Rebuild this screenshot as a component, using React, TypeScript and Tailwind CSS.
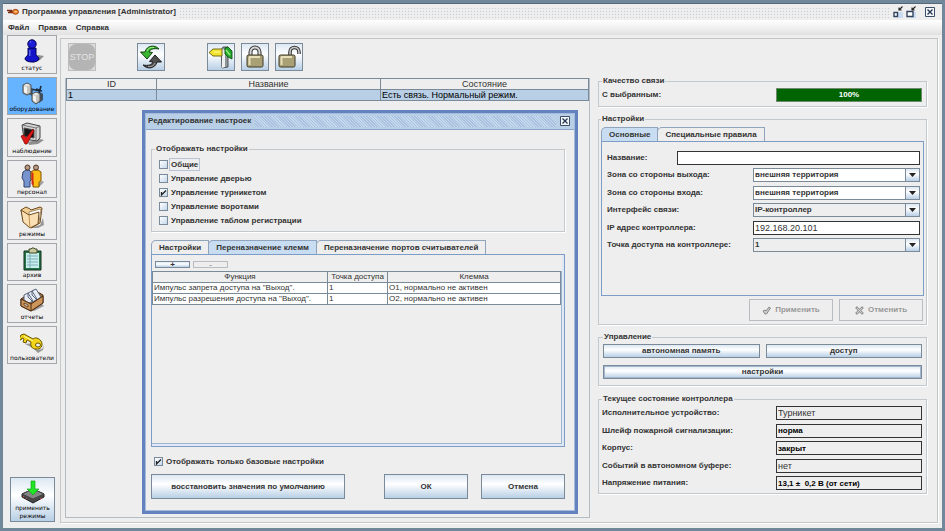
import { useState } from "react";
import type { ReactNode } from "react";
import clsx from "clsx";

const BUTTON_FACE =
  "border border-[#7a8a99] bg-linear-to-b from-[#dde8f3] via-white via-40% to-[#b8cfe5]";

/* ---------- icons ---------- */

function KeyMark() {
  return (
    <svg width="12" height="8" viewBox="0 0 12 8" aria-hidden>
      <path d="M0 2.5h5M1 4.5h5M6.5 3.5h-4" stroke="#7c2d12" strokeWidth="1.4" />
      <ellipse cx="8.5" cy="3.8" rx="3" ry="2.5" fill="#f08020" stroke="#8a3a10" strokeWidth=".8" />
      <path d="M7.5 3.8h2.6" stroke="#fff" strokeWidth=".8" />
    </svg>
  );
}

function CloseMark() {
  return (
    <svg width="10" height="10" viewBox="0 0 10 10" aria-hidden>
      <path d="M.5.5h9v9h-9z" fill="#f3f6fa" stroke="#3c4d66" />
      <path d="m2.5 2.5 5 5m0-5-5 5" stroke="#26364f" strokeWidth="1.3" />
    </svg>
  );
}

function ShrinkMark({ big }: { big?: boolean }) {
  return (
    <svg width="10" height="12" viewBox="0 0 10 12" aria-hidden>
      <path d="M5 6h5v6H5z" fill="#c9daf2" />
      {big ? (
        <path d="M1 5.5h6v5H1z" fill="#fff" stroke="#33435e" strokeWidth="1.4" />
      ) : (
        <path d="M1 6.5h3.5v4H1z" fill="#fff" stroke="#33435e" strokeWidth="1.4" />
      )}
      <path d="M9.5.5 6.5 3.5M6 1.5V4h2.6" fill="none" stroke="#222" strokeWidth="1.1" />
    </svg>
  );
}

function StatusIcon() {
  return (
    <svg className="size-6" viewBox="0 0 24 24" aria-hidden>
      <path d="M12 22l6-6 6 1-4 4-7 3z" fill="#8f8f8f" />
      <path d="M5 20c0-2 2-3 3-4V9h8v7c1 1 3 2 3 4-1 4-13 4-14 0z" fill="#1414c8" stroke="#000058" />
      <circle cx="12" cy="5" r="4.2" fill="#1c1cd8" stroke="#000058" />
      <path d="M9.8 11v6M10 3.5l1-1" stroke="#5c6cf0" strokeWidth="1.4" />
    </svg>
  );
}

function EquipmentIcon() {
  return (
    <svg className="size-6" viewBox="0 0 24 24" aria-hidden>
      <path d="M11 8l9 2M21 5l-2 7M16 8l6 2M9 11l5 3" stroke="#1d2b3a" strokeWidth="1.6" />
      <path d="M9 13l3 2 1-6-3-3zM19 22l4-3v-6l-3-2z" fill="#3f4f60" />
      <path d="M3 4l4-2 4 2v8l-4 2-4-2z" fill="#c4c4bf" stroke="#4a4a4a" />
      <path d="M4 5l3 1.5v6L4 11z" fill="#f4f4f2" />
      <path d="M4 4l3-1.3L10 4 7 5.5z" fill="#e8e8e5" />
      <path d="M12 13l4-2 4 2v7l-4 3-4-3z" fill="#c4c4bf" stroke="#4a4a4a" />
      <path d="M13 14l3 1.5v6L13 19z" fill="#f4f4f2" />
      <path d="M13 13l3-1.3 3 1.3-3 1.5z" fill="#e8e8e5" />
    </svg>
  );
}

function MonitorIcon() {
  return (
    <svg className="size-6" viewBox="0 0 24 24" aria-hidden>
      <path d="M8 20l12-3 4 1-6 4-9 1z" fill="#8f8f8f" />
      <path d="M2 3l5-2 13 3v12l-3 3-13-2z" fill="#d4d4d4" stroke="#444" />
      <path d="M2 3l14 3v12M16 6l4-2" fill="none" stroke="#777" />
      <path d="M4 6l10 2v8L4 14z" fill="#161616" stroke="#555" />
      <path d="M1 14l3-1 2 3L13 7l1 2-7 13H5z" fill="#e01818" stroke="#700" strokeWidth=".7" />
    </svg>
  );
}

function StaffIcon() {
  return (
    <svg className="size-6" viewBox="0 0 24 24" aria-hidden>
      <path d="M16 22l6-5 2 1-5 5z" fill="#999" />
      <path d="M3 8l3-2h3l2 2v8l-1 1v6H4v-6l-2-3z" fill="#7894cf" stroke="#34426b" />
      <circle cx="7.5" cy="3.5" r="2.5" fill="#b99a80" stroke="#4b3328" />
      <path d="M11 8l3-2h4l3 2v9l-2 1v5h-6v-6l-2-2z" fill="#ffbd16" stroke="#805500" />
      <path d="M11.5 8l2 1v13l-2-2z" fill="#d32a1b" />
      <circle cx="16" cy="3.5" r="2.5" fill="#b99a80" stroke="#4b3328" />
    </svg>
  );
}

function FolderIcon() {
  return (
    <svg className="size-6" viewBox="0 0 24 24" aria-hidden>
      <path d="M10 23l10-3 3-7 1 7-6 3z" fill="#999" />
      <path d="M1 5l5-3 4 2 1 1 9-3 2 1-2 15-9 5-7-7z" fill="#f4cf94" stroke="#6d4a1c" />
      <path d="M9 7l11-3 1 1-2 12-9 3z" fill="#fff" stroke="#a08c6c" />
      <path d="M1 5l8 5 10-3-1 12-8 4-7-6z" fill="#fbdfb4" stroke="#6d4a1c" />
      <path d="M9 10l1 13" fill="none" stroke="#c58f48" />
    </svg>
  );
}

function ClipboardIcon() {
  return (
    <svg className="size-6" viewBox="0 0 24 24" aria-hidden>
      <path d="M4 4h17v19H4z" fill="#257347" stroke="#12331f" />
      <path d="M6 6h13v15H6z" fill="#c8eef0" />
      <path d="M7 9h11M7 12h11M7 15h11M7 18h11M10 7v14" stroke="#7fb0b6" />
      <path d="M9 2h2l1-1h2l1 1h2v4H9z" fill="#c9c9a0" stroke="#3c4a25" />
    </svg>
  );
}

function ReportsIcon() {
  return (
    <svg className="size-6" viewBox="0 0 24 24" aria-hidden>
      <path d="M11 22l11-6 2 2-10 5z" fill="#999" />
      <path d="M1 11L14 2l9 5v8l-12 8-10-5z" fill="#9c6b3a" stroke="#4a2b12" />
      <path d="M4 12V7l4-2 5 8-4 2zM8 9V5l4-2 5 8-4 3zM12 7V3l4-2 5 8-4 3z" fill="#e8ecf5" stroke="#59657d" />
      <path d="M1 11l10 5 12-8v7l-12 8-10-5z" fill="#cc955b" stroke="#4a2b12" />
      <path d="M11 16v7" stroke="#4a2b12" />
      <path d="M4 15l4 2v2l-4-2z" fill="#f0e6d0" stroke="#4a2b12" strokeWidth=".8" />
    </svg>
  );
}

function KeyIcon() {
  return (
    <svg className="size-6" viewBox="0 0 24 24" aria-hidden>
      <path d="M5 14l9-1 3 7 5-1 2-4-1 5-5 3-5-5z" fill="#999" />
      <path
        d="M1 5l3-1 9 5c2-2 6-1 8 2 3 5-1 9-5 8-4 0-6-3-5-7l-4-2-1 3-3-1 1-3-2-1-1 2-2-1z"
        fill="#f1d319"
        stroke="#695600"
      />
      <path d="M4 6l9 5" stroke="#fffba0" />
      <ellipse cx="18" cy="15" rx="2.5" ry="2" fill="#eee" stroke="#695600" />
    </svg>
  );
}

function ApplyModesIcon() {
  return (
    <svg className="size-6" viewBox="0 0 24 24" aria-hidden>
      <path d="M1 14L12 9l11 5v3l-11 6-11-6z" fill="#484848" stroke="#222" />
      <path d="M1 14L12 9l11 5-11 5z" fill="#858585" stroke="#444" />
      <path d="M2 16l1 1M5 18l1 1M19 19l2-1" stroke="#d24343" />
      <path d="M10 1h4v8h4l-6 6-6-6h4z" fill="#20e524" stroke="#15a51b" strokeWidth=".7" />
    </svg>
  );
}

function RefreshIcon() {
  return (
    <svg className="size-6" viewBox="0 0 24 24" aria-hidden>
      <path
        d="M20 4C16-.5 8 0 6 7L1.5 7 8 14l5.5-6.5L10 7C11 4 15 3 20 4z"
        fill="#38b62d"
        stroke="#123f12"
      />
      <path d="M8 6c1-3 4-4 7-3.5" stroke="#a8f390" fill="none" />
      <path
        d="M4 20c4 4.500 12 4 14-3l4.500 0L16 10l-5.500 6.500L14 17C13 20 9 21 4 20z"
        fill="#505050"
        stroke="#1b1b1b"
      />
      <path d="M16 18c-1 3-4 4-7 3.500" stroke="#aaa" fill="none" />
    </svg>
  );
}

function TurnstileIcon() {
  return (
    <svg className="size-6" viewBox="0 0 24 24" aria-hidden>
      <path d="M12 5l2-3h5v20l-6 1z" fill="#8f979d" stroke="#555" />
      <path d="M13 4l3 1v17l-3 1z" fill="#eef0f2" />
      <path d="M0 7.5L4 4h9v7H4z" fill="#f2e42b" stroke="#75691b" />
      <path d="M5 7h6" stroke="#fffcae" />
      <path d="M16 3l3-1 4 4v8l-4-2-3-3z" fill="#24a52b" stroke="#145b18" />
      <path d="M17 5l4 5" stroke="#92ed7c" strokeWidth="1.5" />
    </svg>
  );
}

function PadlockIcon({ open }: { open?: boolean }) {
  return (
    <svg className="size-6" viewBox="0 0 24 24" aria-hidden>
      {open ? (
        <>
          <path d="M13 12V7c0-6 9-6 9 0v2" fill="none" stroke="#333" strokeWidth="3.6" />
          <path d="M13 12V7c0-6 9-6 9 0v2" fill="none" stroke="#c8c8c8" strokeWidth="1.6" />
          <rect x="2" y="10" width="16" height="12" rx="1.5" fill="#aaa076" stroke="#3c3827" />
          <path d="M4 12h11M4.5 12v8" stroke="#e7dfb9" strokeWidth="2" />
        </>
      ) : (
        <>
          <path d="M7.5 12V7c0-6 9-6 9 0v5" fill="none" stroke="#333" strokeWidth="4" />
          <path d="M7.5 12V7c0-6 9-6 9 0v5" fill="none" stroke="#d6d6d6" strokeWidth="2" />
          <rect x="4" y="10" width="16" height="12" rx="1.5" fill="#aaa076" stroke="#3c3827" />
          <path d="M6 12h11M6.5 12v8" stroke="#e7dfb9" strokeWidth="2" />
        </>
      )}
    </svg>
  );
}

/* ---------- controls ---------- */

function Group({ title, className, children }: { title: string; className?: string; children: ReactNode }) {
  return (
    <fieldset className={clsx("min-w-0 border border-[#c3c8cc] shadow-[1px_1px_0_#fff]", className)}>
      <legend className="px-px leading-[10px]">{title}</legend>
      {children}
    </fieldset>
  );
}

function Push({ className, children }: { className?: string; children: ReactNode }) {
  return (
    <button type="button" className={clsx("flex items-center justify-center font-bold", BUTTON_FACE, className)}>
      {children}
    </button>
  );
}

function Check({ label, defaultChecked, focused }: { label: string; defaultChecked?: boolean; focused?: boolean }) {
  return (
    <label className="flex h-[14px] items-center gap-px">
      <span className="relative flex size-[9px]">
        <input
          type="checkbox"
          defaultChecked={defaultChecked}
          className="peer size-[9px] appearance-none border border-[#7a8a99] bg-linear-to-br from-white to-[#c4d8ec]"
        />
        <svg
          className="pointer-events-none absolute inset-0 hidden size-[9px] peer-checked:block"
          viewBox="0 0 9 9"
          aria-hidden
        >
          <path d="M2.5 4v3L7 2.5" fill="none" stroke="#222" strokeWidth="1.3" />
        </svg>
      </span>
      <span className={clsx("border px-px leading-[11px]", focused ? "border-[#b8c4d4]" : "border-transparent")}>
        {label}
      </span>
    </label>
  );
}

function Tabs({ names, initial }: { names: string[]; initial: number }) {
  const [active, setActive] = useState(initial);
  return (
    <div role="tablist" className="flex">
      {names.map((name, i) => (
        <button
          key={name}
          type="button"
          role="tab"
          aria-selected={i === active}
          onClick={() => setActive(i)}
          className={clsx(
            "-mr-px h-[14px] rounded-tl-[5px] border border-b-0 border-[#8fa3bd] px-[7px] font-bold",
            i === active ? "bg-[#c8ddf2]" : "bg-[#eeeeee]",
          )}
        >
          {name}
        </button>
      ))}
    </div>
  );
}

function Combo({ id, value, locked }: { id: string; value: string; locked?: boolean }) {
  return (
    <div className="relative h-[14px] w-[167px]">
      <select
        id={id}
        className={clsx(
          "block h-full w-full appearance-none border border-[#7a8a99] pl-px font-bold leading-[12px]",
          locked ? "bg-[#eeeeee]" : "bg-white",
        )}
      >
        <option>{value}</option>
      </select>
      <span
        className={clsx(
          "pointer-events-none absolute inset-y-0 right-0 flex w-[15px] items-center justify-center",
          BUTTON_FACE,
        )}
      >
        <svg width="7" height="4" viewBox="0 0 7 4" aria-hidden>
          <path d="M0 0h7L3.5 4z" fill="#222" />
        </svg>
      </span>
    </div>
  );
}

/* ---------- data ---------- */

const sections = [
  { label: "статус", icon: <StatusIcon /> },
  { label: "оборудование", icon: <EquipmentIcon />, active: true },
  { label: "наблюдение", icon: <MonitorIcon /> },
  { label: "персонал", icon: <StaffIcon /> },
  { label: "режимы", icon: <FolderIcon /> },
  { label: "архив", icon: <ClipboardIcon /> },
  { label: "отчеты", icon: <ReportsIcon /> },
  { label: "пользователи", icon: <KeyIcon /> },
];

const combos = [
  { id: "zone-out", label: "Зона со стороны выхода:", value: "внешняя территория" },
  { id: "zone-in", label: "Зона со стороны входа:", value: "внешняя территория" },
  { id: "link", label: "Интерфейс связи:", value: "IP-контроллер", locked: true },
];

const controllerState = [
  { id: "device", label: "Исполнительное устройство:", value: "Турникет" },
  { id: "fire", label: "Шлейф пожарной сигнализации:", value: "норма", strong: true },
  { id: "case", label: "Корпус:", value: "закрыт", strong: true },
  { id: "events", label: "Событий в автономном буфере:", value: "нет" },
  { id: "power", label: "Напряжение питания:", value: "13,1 ±  0,2 В (от сети)", strong: true },
];

const terminals = [
  ["Импульс запрета доступа на \"Выход\".", "1", "O1, нормально не активен"],
  ["Импульс разрешения доступа на \"Выход\".", "1", "O2, нормально не активен"],
];

/* ---------- sections ---------- */

function Sidebar() {
  return (
    <nav className="flex w-[57px] shrink-0 flex-col items-start justify-between pb-[6px] pl-1">
      <div className="grid h-[329px] w-[50px] auto-rows-fr gap-[3px]">
        {sections.map((s) => (
          <button
            key={s.label}
            type="button"
            className={clsx(
              "flex min-h-0 flex-col items-center justify-between overflow-hidden border border-[#a3a7ab] pt-[3px] pb-px font-['DejaVu_Sans',sans-serif] text-[6px] leading-[8px] text-black",
              s.active ? "bg-[#66b3ff]" : "bg-[#eeeeee]",
            )}
          >
            {s.icon}
            {s.label}
          </button>
        ))}
      </div>
      <button
        type="button"
        className={clsx(
          "ml-[3px] flex size-[45px] flex-col items-center justify-end pb-px font-['DejaVu_Sans',sans-serif] text-[6px] leading-[8px] text-black",
          BUTTON_FACE,
        )}
      >
        <ApplyModesIcon />
        применить
        <br />
        режимы
      </button>
    </nav>
  );
}

function Toolbar() {
  const face = clsx("flex size-7 items-center justify-center", BUTTON_FACE);
  return (
    <div className="flex pl-[3px]">
      <button
        type="button"
        disabled
        className="flex size-7 items-center justify-center border border-[#bcbcbc] bg-[#dcdcdc]"
        aria-label="STOP"
      >
        <span className="flex size-[26px] items-center justify-center rounded-[7px] bg-[#b4b4b4] text-[9px] text-[#e4e4e4]">
          STOP
        </span>
      </button>
      <button type="button" className={clsx(face, "ml-[41px]")} aria-label="Обновить">
        <RefreshIcon />
      </button>
      <div className="ml-[42px] flex gap-[6px]">
        <button type="button" className={face} aria-label="Турникет">
          <TurnstileIcon />
        </button>
        <button type="button" className={face} aria-label="Закрыть доступ">
          <PadlockIcon />
        </button>
        <button type="button" className={face} aria-label="Открыть доступ">
          <PadlockIcon open />
        </button>
      </div>
    </div>
  );
}

function DeviceTable() {
  return (
    <table className="w-full table-fixed border-collapse text-left text-[9px] leading-[10px]">
      <colgroup>
        <col className="w-[90px]" />
        <col />
        <col className="w-[208px]" />
      </colgroup>
      <thead>
        <tr className="h-[11px] text-center">
          {["ID", "Название", "Состояние"].map((h) => (
            <th key={h} className="border border-[#7a8a99] p-0 font-normal">
              {h}
            </th>
          ))}
        </tr>
      </thead>
      <tbody>
        <tr className="h-[11px] bg-[#b8cfe5] text-black">
          <td className="border border-[#7a8a99] p-0 pl-px">1</td>
          <td className="border border-[#7a8a99] p-0" />
          <td className="border border-[#7a8a99] p-0 pl-px">Есть связь. Нормальный режим.</td>
        </tr>
      </tbody>
    </table>
  );
}

function SettingsDialog() {
  return (
    <div
      role="dialog"
      aria-label="Редактирование настроек"
      className="absolute top-[32px] left-[76px] flex w-[436px] flex-col border-3 border-[#6382bf] bg-[#eeeeee] font-bold outline outline-[#a5bbdc] -outline-offset-4"
    >
      <div className="flex h-[17px] items-center gap-1 border-b border-[#8ba4cc] bg-[#b8cfe5] px-[3px]">
        <span>Редактирование настроек</span>
        <span className="h-[11px] flex-1 bg-[repeating-linear-gradient(45deg,#a9c0de_0_1px,#c4d8ee_1px_2px)]" />
        <button type="button" className="mr-[2px]" aria-label="Закрыть">
          <CloseMark />
        </button>
      </div>

      <div className="pt-[14px] pr-[10px] pb-[12px] pl-[6px]">
        <Group title="Отображать настройки" className="px-[3px] pt-[3px] pb-[4px]">
          <div className="pl-1">
            <Check label="Общие" focused />
            <Check label="Управление дверью" />
            <Check label="Управление турникетом" defaultChecked />
            <Check label="Управление воротами" />
            <Check label="Управление таблом регистрации" />
          </div>
        </Group>

        <div className="mt-[8px]">
          <Tabs names={["Настройки", "Переназначение клемм", "Переназначение портов считывателей"]} initial={1} />
        </div>
        <div className="h-[193px] border border-[#7d9cc6] bg-[#dfe9f5] pr-[2px] pb-[2px]">
          <div className="flex h-full flex-col bg-[#eeeeee]">
            <div className="flex gap-[3px] px-[3px] pt-[6px] pb-[3px]">
              <Push className="h-[7px] w-[35px] leading-[5px]">+</Push>
              <button
                type="button"
                disabled
                className="h-[7px] w-[35px] border border-[#b9bdc1] leading-[5px] text-[#999]"
              >
                -
              </button>
            </div>
            <div className="flex-1 border-r border-b border-[#9fb4cf]">
              <table className="w-full table-fixed border-collapse text-left font-normal leading-[10px]">
                <colgroup>
                  <col className="w-[175px]" />
                  <col className="w-[60px]" />
                  <col />
                </colgroup>
                <thead>
                  <tr className="h-[11px] text-center">
                    {["Функция", "Точка доступа", "Клемма"].map((h) => (
                      <th key={h} className="border border-[#7a8a99] p-0 font-normal whitespace-nowrap">
                        {h}
                      </th>
                    ))}
                  </tr>
                </thead>
                <tbody>
                  {terminals.map((row) => (
                    <tr key={row[0]} className="h-[11px] bg-white">
                      {row.map((cell, i) => (
                        <td key={i} className="border border-[#7a8a99] p-0 pl-px whitespace-nowrap">
                          {cell}
                        </td>
                      ))}
                    </tr>
                  ))}
                </tbody>
              </table>
            </div>
          </div>
        </div>

        <div className="mt-[7px] pl-[3px]">
          <Check label="Отображать только базовые настройки" defaultChecked />
        </div>
        <div className="mt-[6px] flex">
          <Push className="h-[25px] w-[194px]">восстановить значения по умолчанию</Push>
          <Push className="ml-auto h-[25px] w-[84px]">ОК</Push>
          <Push className="ml-[13px] h-[25px] w-[84px]">Отмена</Push>
        </div>
      </div>
    </div>
  );
}

function ControllerPanel() {
  return (
    <aside className="flex w-[329px] shrink-0 flex-col pt-[37px] font-bold">
      <Group title="Качество связи" className="px-[3px] pt-[2px] pb-1">
        <div className="flex items-center justify-between">
          <span id="quality">С выбранным:</span>
          <div
            role="progressbar"
            aria-labelledby="quality"
            aria-valuenow={100}
            className="mr-px flex h-[14px] w-[146px] items-center justify-center border border-[#6d8a6d] bg-[#006400] text-white"
          >
            100%
          </div>
        </div>
      </Group>

      <Group title="Настройки" className="mt-[7px] px-[2px] pt-[3px] pb-[3px]">
        <Tabs names={["Основные", "Специальные правила"]} initial={0} />
        <div className="h-[155px] border border-[#7d9cc6] py-[9px] pr-[3px] pl-[5px]">
          <div className="flex h-[101px] flex-col justify-between">
            <div className="flex items-center justify-between">
              <label htmlFor="name">Название:</label>
              <input
                id="name"
                className="h-[14px] w-[243px] border border-[#333] bg-white px-px text-[9px] font-normal"
              />
            </div>
            {combos.map((c) => (
              <div key={c.id} className="flex items-center justify-between">
                <label htmlFor={c.id}>{c.label}</label>
                <Combo id={c.id} value={c.value} locked={c.locked} />
              </div>
            ))}
            <div className="flex items-center justify-between">
              <label htmlFor="ip">IP адрес контроллера:</label>
              <input
                id="ip"
                defaultValue="192.168.20.101"
                className="h-[14px] w-[167px] border border-[#333] bg-white px-px text-[9px] font-normal"
              />
            </div>
            <div className="flex items-center justify-between">
              <label htmlFor="point">Точка доступа на контроллере:</label>
              <Combo id="point" value="1" locked />
            </div>
          </div>
        </div>
        <div className="mt-[3px] flex justify-end gap-[6px] pr-px text-[#999999]">
          <button
            type="button"
            disabled
            className="flex h-[22px] w-[84px] items-center justify-center gap-1 border border-[#b9bdc1] font-bold"
          >
            <svg width="9" height="9" viewBox="0 0 9 9" aria-hidden>
              <path d="M1 5l2-1 1 1 3-4 1.5 1L4.5 8H3z" fill="#ccc" stroke="#888" />
            </svg>
            Применить
          </button>
          <button
            type="button"
            disabled
            className="flex h-[22px] w-[84px] items-center justify-center gap-1 border border-[#b9bdc1] font-bold"
          >
            <svg width="9" height="9" viewBox="0 0 9 9" aria-hidden>
              <path d="M1 1l7 7m0-7L1 8" stroke="#999" strokeWidth="2.5" />
              <path d="M2 2l5 5m0-5L2 7" stroke="#ddd" strokeWidth=".8" />
            </svg>
            Отменить
          </button>
        </div>
      </Group>

      <Group title="Управление" className="mt-[7px] px-1 pt-[2px] pb-[6px]">
        <div className="grid grid-cols-2 gap-x-[6px] gap-y-[7px]">
          <Push className="h-[14px]">автономная память</Push>
          <Push className="h-[14px]">доступ</Push>
          <Push className="col-span-2 h-[14px] outline outline-[#a3b8cc] -outline-offset-2">настройки</Push>
        </div>
      </Group>

      <Group title="Текущее состояние контроллера" className="mt-[8px] px-[3px] pt-[2px] pb-[3px]">
        <div className="flex h-[84px] flex-col justify-between pr-px">
          {controllerState.map((s) => (
            <div key={s.id} className="flex items-center justify-between">
              <label htmlFor={s.id}>{s.label}</label>
              <input
                id={s.id}
                readOnly
                defaultValue={s.value}
                className={clsx(
                  "h-[14px] w-[146px] border border-[#333] bg-[#eeeeee] px-px",
                  s.strong ? "font-bold text-black" : "text-[9px] font-normal",
                )}
              />
            </div>
          ))}
        </div>
      </Group>
    </aside>
  );
}

export default function App() {
  return (
    <div className="flex h-screen flex-col overflow-hidden border-3 border-[#71879a] bg-[#eeeeee] font-['Liberation_Sans',Arial,sans-serif] text-[8px] leading-[12px] text-[#333333]">
      <header className="flex h-[17px] shrink-0 items-center gap-[3px] border-t border-[#54687a] pr-[7px] pl-1 font-bold">
        <KeyMark />
        <h1>Программа управления [Administrator]</h1>
        <span className="h-[11px] flex-1 bg-[radial-gradient(#c6cdd4_1px,transparent_1px)] bg-[size:3px_3px]" />
        <button type="button" aria-label="Свернуть">
          <ShrinkMark />
        </button>
        <button type="button" aria-label="Восстановить">
          <ShrinkMark big />
        </button>
        <button type="button" className="ml-[6px]" aria-label="Закрыть окно">
          <CloseMark />
        </button>
      </header>

      <div className="flex h-[15px] shrink-0 items-center gap-[9px] bg-linear-to-b from-white to-[#e2e2e2] pl-[5px] font-bold">
        {["Файл", "Правка", "Справка"].map((m) => (
          <button key={m} type="button">
            {m}
          </button>
        ))}
      </div>

      <div className="flex min-h-0 flex-1">
        <Sidebar />
        <main className="mt-[3px] mr-[4px] mb-[5px] flex min-w-0 flex-1 border border-[#c3c8c6] pr-[10px] shadow-[1px_1px_0_#fff]">
          <div className="flex min-w-0 flex-1 flex-col pt-1 pb-1 pl-1">
            <Toolbar />
            <div className="relative mt-[7px] min-h-0 flex-1 border border-t-0 border-[#b4bcc3]">
              <DeviceTable />
              <SettingsDialog />
            </div>
          </div>
          <div className="w-2 shrink-0" />
          <ControllerPanel />
        </main>
      </div>
    </div>
  );
}
